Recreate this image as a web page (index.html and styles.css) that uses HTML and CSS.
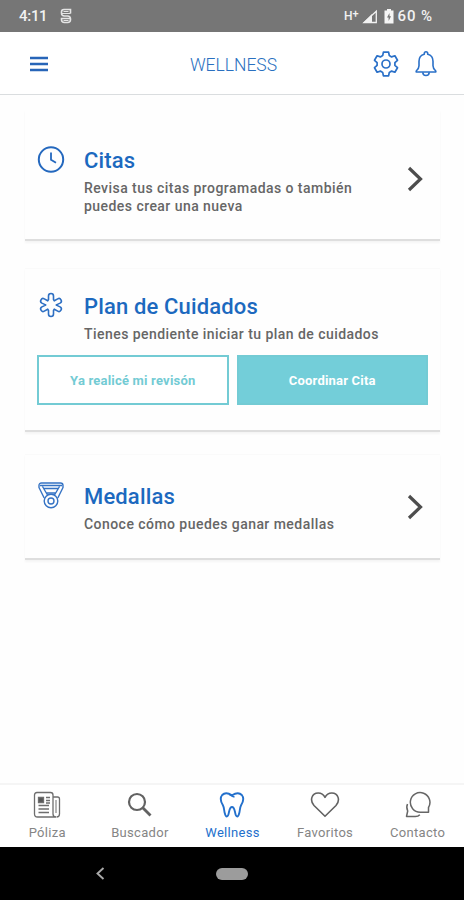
FILE: index.html
```html
<!DOCTYPE html>
<html lang="es">
<head>
    <meta charset="UTF-8">
    <meta name="viewport" content="width=device-width, initial-scale=1.0">
    <title>Wellness</title>
    <link rel="stylesheet" href="styles.css">
</head>
<body>
    <div class="status-bar">
        <span class="time">4:11</span>
        <svg class="app-icon" width="12" height="16" viewBox="0 0 12 16" fill="none" stroke="#e4e4e4" stroke-width="1.6">
            <path d="M10.500 5.500V1.500H4Q1.500 1.500 1.500 4v1q0 3 3 3h3q3 0 3 3v.5q0 3-3 3H4.500q-3 0-3-3V10.500h9"/>
            <path d="M1.500 5.500h9M3.500 3.500h5M3.500 12.500h5" stroke-width="1.200"/>
        </svg>
        <span class="network">H<sup>+</sup></span>
        <svg class="signal" width="16" height="15" viewBox="0 0 16 15">
            <path d="M14.300 2.300V13.500H2z" fill="none" stroke="#f2f2f2" stroke-width="1.3"/>
            <path d="M10 5v9H1z" fill="#f2f2f2"/>
        </svg>
        <svg class="battery" width="10" height="15" viewBox="0 0 10 15">
            <path d="M3 0h4v1.500h2.500v13h-9v-13H3z" fill="#f5f5f5"/>
            <path d="M5.500 4L3 8.500h1.600V12L7 7.300H5.500z" fill="#767676"/>
        </svg>
        <span class="percent">60 %</span>
    </div>

    <header class="header">
        <svg class="menu" width="18" height="16" viewBox="0 0 18 16" stroke="#2765b8" stroke-width="2.300">
            <path d="M0 2h18M0 8h18M0 14h18"/>
        </svg>
        <h1 class="header-title">WELLNESS</h1>
        <div class="header-actions">
            <svg width="26" height="26" viewBox="0 0 26 26" fill="none" stroke="#2a70c8" stroke-width="1.700" stroke-linejoin="round">
                <path d="M10.400 1.200h5.200l.7 3.400 2.300 1.300 3.300-1.100 2.600 4.500-2.600 2.300v2.800l2.600 2.300-2.600 4.500-3.300-1.100-2.300 1.300-.7 3.400h-5.200l-.7-3.400-2.300-1.300-3.300 1.100-2.600-4.500 2.600-2.300v-2.800L1.500 9.300l2.600-4.500 3.300 1.100 2.300-1.300z"/>
                <circle cx="13" cy="13" r="4"/>
            </svg>
            <svg width="22" height="26" viewBox="0 0 22 26" fill="none" stroke="#2a70c8" stroke-width="1.600" stroke-linejoin="round">
                <path d="M9.300 3.300V2.500a1.700 1.700 0 0 1 3.400 0v.8c3.400.8 5.300 3.600 5.300 7v4.500c0 2.200.8 3.600 2.800 5.200v1H1.200v-1C3.200 18.400 4 17 4 14.800v-4.500c0-3.400 1.900-6.200 5.300-7z"/>
                <path d="M7.800 21.200c0 4.400 6.400 4.400 6.400 0"/>
            </svg>
        </div>
    </header>

    <main class="content">
        <section class="card card-citas">
            <div class="card-row">
                <svg class="card-icon" width="28" height="28" viewBox="0 0 28 28" fill="none" stroke="#2468be" stroke-width="2">
                    <circle cx="14" cy="13.500" r="12.200"/>
                    <path d="M14 6.500v7.200l5 3" stroke-width="1.800"/>
                </svg>
                <div class="card-text">
                    <h2>Citas</h2>
                    <p>Revisa tus citas programadas o también<br>puedes crear una nueva</p>
                </div>
                <svg class="chevron" width="16" height="26" viewBox="0 0 16 26" fill="none" stroke="#4d4d4d" stroke-width="3.200">
                    <path d="M2 2l11.500 11L2 24"/>
                </svg>
            </div>
        </section>

        <section class="card card-plan">
            <div class="card-row">
                <svg class="card-icon" width="28" height="28" viewBox="0 0 28 28" fill="none" stroke="#2d6fc3" stroke-width="1.600" stroke-linejoin="round">
                    <path d="M11.500 7.500V4a2.500 2.500 0 0 1 5 0v3.500l.8 1.300 3.400-1.900a2.400 2.400 0 0 1 2.400 4.200l-3.200 1.500-.6.400.6.400 3.200 1.500a2.400 2.400 0 0 1-2.400 4.200l-3.400-1.900-.8 1.300V22a2.500 2.500 0 0 1-5 0v-3.500l-.8-1.300-3.400 1.900a2.400 2.400 0 0 1-2.400-4.200l3.200-1.500.6-.4-.6-.4-3.200-1.500a2.400 2.400 0 0 1 2.400-4.200l3.400 1.900z"/>
                </svg>
                <div class="card-text">
                    <h2>Plan de Cuidados</h2>
                    <p>Tienes pendiente iniciar tu plan de cuidados</p>
                </div>
            </div>
            <div class="buttons">
                <button class="btn btn-outline">Ya realicé mi revisón</button>
                <button class="btn btn-filled">Coordinar Cita</button>
            </div>
        </section>

        <section class="card card-medallas">
            <div class="card-row">
                <svg class="card-icon" width="28" height="28" viewBox="0 0 28 28" fill="none" stroke="#3573c4" stroke-width="1.400" stroke-linejoin="round">
                    <path d="M4.500 1h19q2.500 0 2.500 2.500v2L20.800 16M7.200 16L2 5.500v-2Q2 1 4.500 1"/>
                    <path d="M3 3.500h22M7 6.500h14M5.500 4.500l5 8.500M22.500 4.500l-5 8.500M9.700 11h8.600"/>
                    <circle cx="14" cy="19" r="6.800"/>
                    <circle cx="14" cy="19" r="3"/>
                </svg>
                <div class="card-text">
                    <h2>Medallas</h2>
                    <p>Conoce cómo puedes ganar medallas</p>
                </div>
                <svg class="chevron" width="16" height="26" viewBox="0 0 16 26" fill="none" stroke="#4d4d4d" stroke-width="3.200">
                    <path d="M2 2l11.500 11L2 24"/>
                </svg>
            </div>
        </section>
    </main>

    <nav class="tabs">
        <a class="tab">
            <svg width="28" height="28" viewBox="0 0 28 28" fill="none" stroke="#6e6e6e" stroke-width="1.300">
                <path d="M20 5.500V23q0 3 3 3H4.500q-3 0-3-3V4q0-2.500 2.500-2.500h13.500Q20 1.500 20 4v2h4.500q2 0 2 2v15q0 3-3 3"/>
                <path d="M23 9v13" stroke-width="1"/>
                <path d="M5.500 6.500h5v5h-5z" fill="#555"/>
                <path d="M13 6.500h4M13 9.500h4M13 12h4M5.500 14.500H16M5.500 18H16M5.500 21.500H16" stroke-width="1.400"/>
            </svg>
            <span>Póliza</span>
        </a>
        <a class="tab">
            <svg width="28" height="28" viewBox="0 0 28 28" fill="none" stroke="#626262" stroke-width="2.200">
                <circle cx="11" cy="11" r="8"/>
                <path d="M16.500 16.500l8 8" stroke-width="2.800"/>
            </svg>
            <span>Buscador</span>
        </a>
        <a class="tab active">
            <svg width="28" height="28" viewBox="0 0 28 28" fill="none" stroke="#2370cc" stroke-width="1.900" stroke-linejoin="round">
                <path d="M14 4.200C10.500 2 6.500 1.500 4.200 4c-2.500 3-1.200 7 .6 10 1.300 2.300 1.200 5 1.800 7.500.6 2.600 1 4 2.200 4 1.600 0 1.700-2.300 2.300-5 .5-2.200 1-4.500 2.900-4.500s2.400 2.300 2.900 4.500c.6 2.700.7 5 2.300 5 1.200 0 1.600-1.400 2.200-4 .6-2.500.5-5.200 1.800-7.500 1.800-3 3.100-7 .6-10-2.300-2.500-6.300-2-9.800.2z"/>
                <path d="M11 3.300c1.500.9 3 2.200 5.500 2.700" stroke-width="1.400"/>
            </svg>
            <span>Wellness</span>
        </a>
        <a class="tab">
            <svg width="30" height="28" viewBox="0 0 30 28" fill="none" stroke="#626262" stroke-width="1.600" stroke-linejoin="round">
                <path d="M15 25.300L4 14.500C-.5 9.500 1.600 2 8.200 2c3.300 0 5.500 1.700 6.800 4.300C16.300 3.700 18.500 2 21.800 2c6.600 0 8.700 7.500 4.200 12.500z"/>
            </svg>
            <span>Favoritos</span>
        </a>
        <a class="tab">
            <svg width="28" height="28" viewBox="0 0 28 28" fill="none" stroke="#666" stroke-width="1.500" stroke-linejoin="round">
                <path d="M24.500 16.500v4.700h-8.300A9.800 9.800 0 1 1 24.500 16.500z"/>
                <path d="M3.500 13q-1.500 3 .2 7l-1.200 5.500h8.800q3 0 4.500-1.800"/>
            </svg>
            <span>Contacto</span>
        </a>
    </nav>

    <div class="system-bar">
        <svg class="back" width="9" height="13" viewBox="0 0 9 13" fill="none" stroke="#aaa" stroke-width="1.900">
            <path d="M7.500 1l-6 5.500 6 5.500"/>
        </svg>
        <span class="home"></span>
    </div>
</body>
</html>
```
FILE: styles.css
```css
* {
    box-sizing: border-box;
}

body {
    font-family: Roboto, Arial, sans-serif;
    margin: 0;
    height: 900px;
    display: flex;
    flex-direction: column;
    background-color: #fefefe;
    overflow: hidden;
}

h1, h2, p {
    margin: 0;
}

svg {
    display: block;
    flex: none;
}

.status-bar {
    height: 32px;
    flex: none;
    display: flex;
    align-items: center;
    padding: 0 31px 0 19px;
    background-color: #767676;
    color: #f2f2f2;
    font-size: 15px;
    font-weight: 500;
}

.time {
    width: 41px;
    letter-spacing: -0.3px;
}

.network {
    margin-left: auto;
    margin-right: 3px;
    font-size: 12px;
}

.network sup {
    font-size: 11px;
    line-height: 0;
    vertical-align: 3px;
}

.battery {
    margin: 0 4px 0 6px;
}

.percent {
    letter-spacing: 0.9px;
}

.header {
    height: 63px;
    flex: none;
    display: grid;
    grid-template-columns: 1fr auto 1fr;
    align-items: center;
    padding: 0 27px 0 30px;
    border-bottom: 1px solid #dadddf;
    background-color: #fff;
}

.menu {
    margin-top: 1px;
}

.header-title {
    color: #2a70c0;
    font-size: 17.5px;
    font-weight: 300;
    padding-top: 4px;
}

.header-actions {
    display: flex;
    justify-content: flex-end;
    gap: 16px;
    padding-top: 1px;
}

.content {
    flex: 1;
    padding: 15px 24px 0 25px;
}

.card {
    padding: 0 12px;
    border-bottom: 2px solid #dedede;
    box-shadow: 0 2px 2px rgba(0, 0, 0, 0.04);
}

.card-citas {
    height: 131px;
    padding-top: 36px;
}

.card-plan {
    height: 164px;
    margin-top: 27px;
    padding-top: 23px;
    border-top: 1px solid #fafafa;
}

.card-medallas {
    height: 106px;
    margin-top: 22px;
    padding-top: 27px;
    border-top: 1px solid #fafafa;
}

.card-row {
    display: flex;
    align-items: flex-start;
}

.card-icon {
    margin-right: 19px;
}

.card-text {
    flex: 1;
}

.card h2 {
    color: #1c69bf;
    font-size: 22px;
    font-weight: 500;
    line-height: 29px;
    letter-spacing: 0.15px;
}

.card p {
    color: #666;
    font-size: 14px;
    font-weight: 500;
    line-height: 18px;
    letter-spacing: 0.45px;
    margin-top: 4px;
    white-space: nowrap;
}

.chevron {
    align-self: center;
    margin-right: 5px;
}

.card-citas .chevron {
    margin-bottom: 3px;
}

.card-medallas .chevron {
    margin-bottom: 2px;
}

.buttons {
    display: flex;
    gap: 8px;
    margin-top: 12px;
}

.btn {
    flex: 1;
    height: 50px;
    padding: 0;
    border: 2px solid #73cbd4;
    font-family: inherit;
    font-size: 13px;
    font-weight: 700;
}

.btn-outline {
    background-color: #fff;
    color: #73cbd4;
    letter-spacing: 0.2px;
}

.btn-filled {
    background-color: #73ced9;
    color: #fff;
    letter-spacing: 0.2px;
}

.tabs {
    height: 64px;
    flex: none;
    display: flex;
    padding-left: 1px;
    border-top: 2px solid #f5f5f5;
    background-color: #fff;
}

.tab {
    flex: 1;
    display: flex;
    flex-direction: column;
    align-items: center;
    padding-top: 6px;
    color: #858585;
    font-size: 13px;
    line-height: 16px;
    letter-spacing: 0.3px;
}

.tab span {
    margin-top: 6px;
}

.tab.active {
    color: #2370cc;
}

.system-bar {
    height: 53px;
    flex: none;
    display: grid;
    grid-template-columns: 1fr auto 1fr;
    align-items: center;
    background-color: #000;
}

.back {
    margin-left: 96px;
}

.home {
    width: 32px;
    height: 12px;
    border-radius: 6px;
    background-color: #9c9c9c;
}
```
